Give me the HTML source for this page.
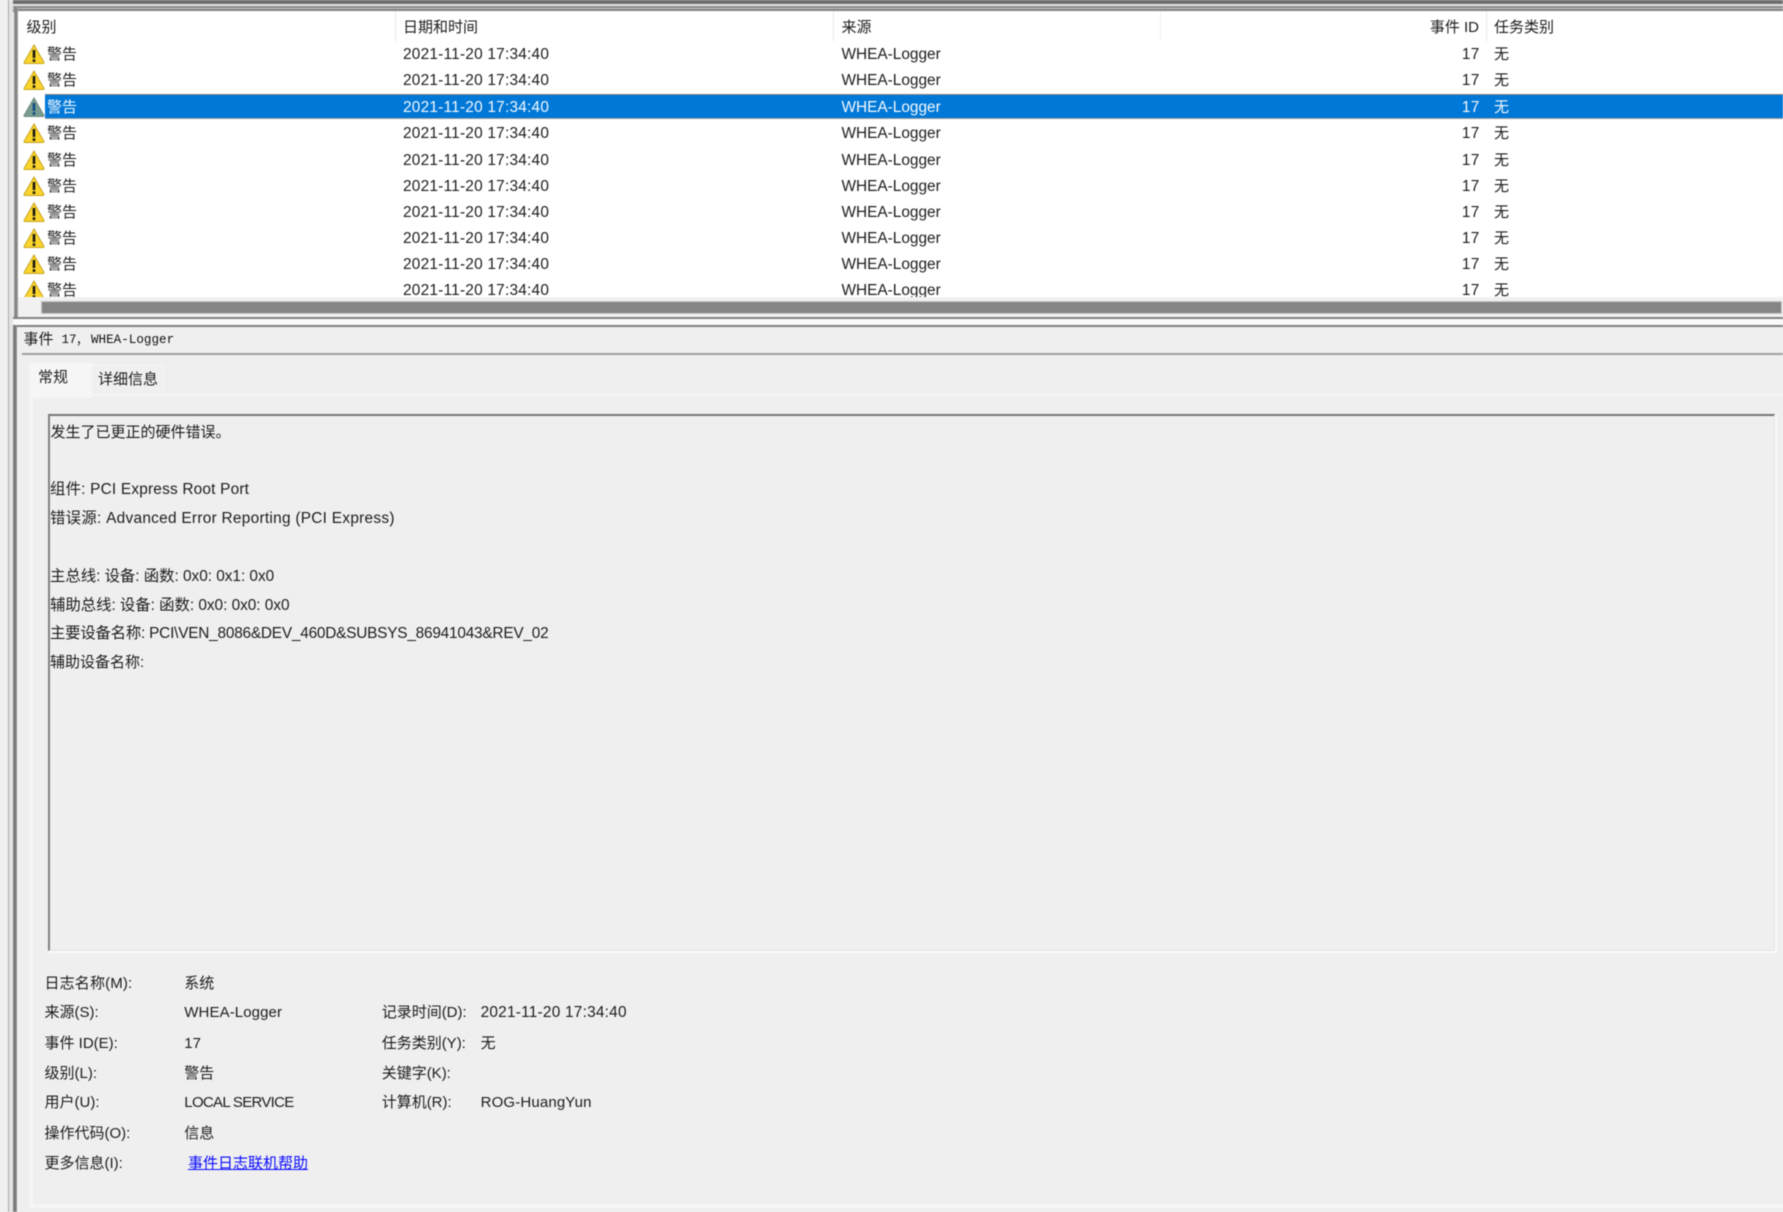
<!DOCTYPE html>
<html lang="zh-CN">
<head>
<meta charset="utf-8">
<title>事件 17，WHEA-Logger</title>
<style>
html,body{margin:0;padding:0;background:#f0f0f0;}
#page{position:relative;width:1783px;height:1212px;overflow:hidden;background:#f0f0f0;
font-family:"Liberation Sans","Noto Sans CJK SC",sans-serif;font-size:15px;color:#1c1c1c;filter:blur(.4px);}
.b{position:absolute;}
.t{position:absolute;white-space:nowrap;line-height:20px;height:20px;}
.d{letter-spacing:.23px;font-size:15.4px;}
.w{letter-spacing:0;font-size:15.4px;}
.row{position:absolute;left:18px;right:0;height:26px;}
.row .t{top:3px;}
.sel{color:#f4f9ff;}
svg{position:absolute;left:5px;top:2px;}
</style>
</head>
<body>
<div id="page">
<!-- outer frame lines -->
<div class="b" style="left:8px;top:0;width:1px;height:1212px;background:#a8a8a8"></div>
<div class="b" style="left:9px;top:0;width:4px;height:1212px;background:#e4e4e4"></div>
<div class="b" style="left:13px;top:0;right:0;height:3.5px;background:#6e6e6e"></div>
<div class="b" style="left:13px;top:3.5px;right:0;height:2px;background:#e6e6e6"></div>
<div class="b" style="left:13px;top:5.5px;right:0;height:2px;background:#8a8a8a"></div>
<div class="b" style="left:13px;top:7.5px;right:0;height:1.5px;background:#c4c4c4"></div>
<div class="b" style="left:13px;top:9px;right:0;height:2.5px;background:#808080"></div>
<div class="b" style="left:14px;top:5.5px;width:4px;height:314px;background:linear-gradient(90deg,#9a9a9a,#7c7c7c 50%,#a8a8a8)"></div>
<div class="b" style="left:13px;top:324px;width:4px;height:888px;background:linear-gradient(90deg,#8e8e8e,#707070 50%,#a0a0a0)"></div>

<!-- list -->
<div class="b" style="left:18px;top:11px;right:0;height:286px;background:#fff;overflow:hidden" id="list">
  <div class="b" style="left:377px;top:0;width:1px;height:30px;background:#e8e8e8"></div>
  <div class="b" style="left:815px;top:0;width:1px;height:30px;background:#e8e8e8"></div>
  <div class="b" style="left:1142px;top:0;width:1px;height:30px;background:#efefef"></div>
  <div class="b" style="left:1468px;top:0;width:1px;height:30px;background:#e8e8e8"></div>
  <div class="t" style="left:8.5px;top:7px">级别</div>
  <div class="t" style="left:385px;top:7px">日期和时间</div>
  <div class="t" style="left:823.5px;top:7px">来源</div>
  <div class="t" style="right:304px;top:7px">事件 ID</div>
  <div class="t" style="left:1476px;top:7px">任务类别</div>

  <div class="row" style="top:31px;left:0"><svg width="22" height="20" viewBox="0 0 22 20"><path d="M11 1 L21 18.5 Q21 19.5 20 19.5 L2 19.5 Q1 19.5 1 18.5 Z" fill="#fbd52c" stroke="#c9a21a"/><rect x="9.7" y="6" width="2.6" height="8" fill="#1a1a10"/><rect x="9.7" y="15.3" width="2.6" height="2.6" fill="#1a1a10"/></svg><div class="t" style="left:29px">警告</div><div class="t d" style="left:385px">2021-11-20 17:34:40</div><div class="t w" style="left:823.5px">WHEA-Logger</div><div class="t d" style="right:303.5px">17</div><div class="t" style="left:1476px">无</div></div>
  <div class="row" style="top:57px;left:0"><svg width="22" height="20" viewBox="0 0 22 20"><path d="M11 1 L21 18.5 Q21 19.5 20 19.5 L2 19.5 Q1 19.5 1 18.5 Z" fill="#fbd52c" stroke="#c9a21a"/><rect x="9.7" y="6" width="2.6" height="8" fill="#1a1a10"/><rect x="9.7" y="15.3" width="2.6" height="2.6" fill="#1a1a10"/></svg><div class="t" style="left:29px">警告</div><div class="t d" style="left:385px">2021-11-20 17:34:40</div><div class="t w" style="left:823.5px">WHEA-Logger</div><div class="t d" style="right:303.5px">17</div><div class="t" style="left:1476px">无</div></div>

  <div class="b" style="left:27px;right:0;top:82.8px;height:25.6px;background:#0078d7;border-top:1px solid #808080;border-bottom:1px solid #9a9a9a;box-sizing:border-box"></div>
  <div class="row sel" style="top:84px;left:0"><svg width="22" height="20" viewBox="0 0 22 20"><path d="M11 1 L21 18.5 Q21 19.5 20 19.5 L2 19.5 Q1 19.5 1 18.5 Z" fill="#7a9b90" stroke="#6a8a80"/><rect x="9.7" y="6" width="2.6" height="8" fill="#0e4c86"/><rect x="9.7" y="15.3" width="2.6" height="2.6" fill="#0e4c86"/></svg><div class="t" style="left:29px">警告</div><div class="t d" style="left:385px">2021-11-20 17:34:40</div><div class="t w" style="left:823.5px">WHEA-Logger</div><div class="t d" style="right:303.5px">17</div><div class="t" style="left:1476px">无</div></div>

  <div class="row" style="top:110px;left:0"><svg width="22" height="20" viewBox="0 0 22 20"><path d="M11 1 L21 18.5 Q21 19.5 20 19.5 L2 19.5 Q1 19.5 1 18.5 Z" fill="#fbd52c" stroke="#c9a21a"/><rect x="9.7" y="6" width="2.6" height="8" fill="#1a1a10"/><rect x="9.7" y="15.3" width="2.6" height="2.6" fill="#1a1a10"/></svg><div class="t" style="left:29px">警告</div><div class="t d" style="left:385px">2021-11-20 17:34:40</div><div class="t w" style="left:823.5px">WHEA-Logger</div><div class="t d" style="right:303.5px">17</div><div class="t" style="left:1476px">无</div></div>
  <div class="row" style="top:137px;left:0"><svg width="22" height="20" viewBox="0 0 22 20"><path d="M11 1 L21 18.5 Q21 19.5 20 19.5 L2 19.5 Q1 19.5 1 18.5 Z" fill="#fbd52c" stroke="#c9a21a"/><rect x="9.7" y="6" width="2.6" height="8" fill="#1a1a10"/><rect x="9.7" y="15.3" width="2.6" height="2.6" fill="#1a1a10"/></svg><div class="t" style="left:29px">警告</div><div class="t d" style="left:385px">2021-11-20 17:34:40</div><div class="t w" style="left:823.5px">WHEA-Logger</div><div class="t d" style="right:303.5px">17</div><div class="t" style="left:1476px">无</div></div>
  <div class="row" style="top:163px;left:0"><svg width="22" height="20" viewBox="0 0 22 20"><path d="M11 1 L21 18.5 Q21 19.5 20 19.5 L2 19.5 Q1 19.5 1 18.5 Z" fill="#fbd52c" stroke="#c9a21a"/><rect x="9.7" y="6" width="2.6" height="8" fill="#1a1a10"/><rect x="9.7" y="15.3" width="2.6" height="2.6" fill="#1a1a10"/></svg><div class="t" style="left:29px">警告</div><div class="t d" style="left:385px">2021-11-20 17:34:40</div><div class="t w" style="left:823.5px">WHEA-Logger</div><div class="t d" style="right:303.5px">17</div><div class="t" style="left:1476px">无</div></div>
  <div class="row" style="top:189px;left:0"><svg width="22" height="20" viewBox="0 0 22 20"><path d="M11 1 L21 18.5 Q21 19.5 20 19.5 L2 19.5 Q1 19.5 1 18.5 Z" fill="#fbd52c" stroke="#c9a21a"/><rect x="9.7" y="6" width="2.6" height="8" fill="#1a1a10"/><rect x="9.7" y="15.3" width="2.6" height="2.6" fill="#1a1a10"/></svg><div class="t" style="left:29px">警告</div><div class="t d" style="left:385px">2021-11-20 17:34:40</div><div class="t w" style="left:823.5px">WHEA-Logger</div><div class="t d" style="right:303.5px">17</div><div class="t" style="left:1476px">无</div></div>
  <div class="row" style="top:215px;left:0"><svg width="22" height="20" viewBox="0 0 22 20"><path d="M11 1 L21 18.5 Q21 19.5 20 19.5 L2 19.5 Q1 19.5 1 18.5 Z" fill="#fbd52c" stroke="#c9a21a"/><rect x="9.7" y="6" width="2.6" height="8" fill="#1a1a10"/><rect x="9.7" y="15.3" width="2.6" height="2.6" fill="#1a1a10"/></svg><div class="t" style="left:29px">警告</div><div class="t d" style="left:385px">2021-11-20 17:34:40</div><div class="t w" style="left:823.5px">WHEA-Logger</div><div class="t d" style="right:303.5px">17</div><div class="t" style="left:1476px">无</div></div>
  <div class="row" style="top:241px;left:0"><svg width="22" height="20" viewBox="0 0 22 20"><path d="M11 1 L21 18.5 Q21 19.5 20 19.5 L2 19.5 Q1 19.5 1 18.5 Z" fill="#fbd52c" stroke="#c9a21a"/><rect x="9.7" y="6" width="2.6" height="8" fill="#1a1a10"/><rect x="9.7" y="15.3" width="2.6" height="2.6" fill="#1a1a10"/></svg><div class="t" style="left:29px">警告</div><div class="t d" style="left:385px">2021-11-20 17:34:40</div><div class="t w" style="left:823.5px">WHEA-Logger</div><div class="t d" style="right:303.5px">17</div><div class="t" style="left:1476px">无</div></div>
  <div class="row" style="top:267px;left:0"><svg width="22" height="20" viewBox="0 0 22 20"><path d="M11 1 L21 18.5 Q21 19.5 20 19.5 L2 19.5 Q1 19.5 1 18.5 Z" fill="#fbd52c" stroke="#c9a21a"/><rect x="9.7" y="6" width="2.6" height="8" fill="#1a1a10"/><rect x="9.7" y="15.3" width="2.6" height="2.6" fill="#1a1a10"/></svg><div class="t" style="left:29px">警告</div><div class="t d" style="left:385px">2021-11-20 17:34:40</div><div class="t w" style="left:823.5px">WHEA-Logger</div><div class="t d" style="right:303.5px">17</div><div class="t" style="left:1476px">无</div></div>
</div>

<!-- horizontal scrollbar -->
<div class="b" style="left:18px;top:297px;right:0;height:20px;background:#f1f1f1"></div>
<div class="b" style="left:40.5px;top:301px;width:1741px;height:12.5px;background:#858585;border:1px solid #c8c8c8;box-sizing:border-box"></div>
<div class="b" style="left:13px;top:317.3px;right:0;height:2px;background:#828282"></div>
<div class="b" style="left:13px;top:319.3px;right:0;height:5.3px;background:#fafafa"></div>
<div class="b" style="left:17px;top:324.6px;right:0;height:2px;background:#808080"></div>

<!-- detail panel -->
<div class="b" style="left:17px;top:326.6px;right:0;height:885.4px;background:#efefef"></div>
<div class="t" style="left:23.5px;top:330px">事件</div>
<div class="t" style="left:61.5px;top:329.5px;font-family:'Liberation Mono',monospace;font-size:12.6px;color:#111">17</div>
<div class="t" style="left:76px;top:330px;font-size:12px;color:#111">，</div>
<div class="t" style="left:91px;top:329.5px;font-family:'Liberation Mono',monospace;font-size:12.6px;color:#111">WHEA-Logger</div>
<div class="b" style="left:22px;top:352.7px;right:0;height:2.6px;background:#a0a0a0"></div>

<!-- tabs -->
<div class="b" style="left:28.7px;top:394px;right:0;height:814px;background:#f6f6f6"></div>
<div class="b" style="left:32.7px;top:396px;right:0;height:808px;background:#efefef"></div>
<div class="b" style="left:28.7px;top:362.7px;width:63.5px;height:35px;background:#f6f6f6"></div>
<div class="b" style="left:92.2px;top:365.3px;width:71.8px;height:29px;background:#f0f0f0;border:1px solid #f6f6f6;border-left:0;border-bottom:0;box-sizing:border-box"></div>
<div class="t" style="left:38px;top:368px">常规</div>
<div class="t" style="left:98px;top:370px">详细信息</div>

<!-- message box -->
<div class="b" style="left:47.5px;top:414px;width:1729.5px;height:539px;box-sizing:border-box;background:#fbfbfb"></div>
<div class="b" style="left:47.5px;top:414px;width:1727.5px;height:537px;box-sizing:border-box;background:#efefef;border-top:2px solid #767676;border-left:2px solid #808080;border-right:1.5px solid #e2e2e2;border-bottom:1.5px solid #e2e2e2"></div>
<div class="t" style="left:50.5px;top:423px">发生了已更正的硬件错误。</div>
<div class="t" style="left:50px;top:480px;font-size:15.4px;letter-spacing:.2px">组件: PCI Express Root Port</div>
<div class="t" style="left:50px;top:509px;font-size:15.4px;letter-spacing:.28px">错误源: Advanced Error Reporting (PCI Express)</div>
<div class="t" style="left:50px;top:567px;font-size:15.4px;letter-spacing:-.03px">主总线: 设备: 函数: 0x0: 0x1: 0x0</div>
<div class="t" style="left:50px;top:596px;font-size:15.4px;letter-spacing:-.03px">辅助总线: 设备: 函数: 0x0: 0x0: 0x0</div>
<div class="t" style="left:50px;top:624px;font-size:15.4px;letter-spacing:-.22px">主要设备名称: PCI\VEN_8086&amp;DEV_460D&amp;SUBSYS_86941043&amp;REV_02</div>
<div class="t" style="left:50px;top:653px;font-size:15px">辅助设备名称:</div>

<!-- fields -->
<div class="t" style="left:44.5px;top:974px;letter-spacing:.15px">日志名称(M):</div>
<div class="t" style="left:184.3px;top:974px">系统</div>
<div class="t" style="left:44.5px;top:1003px">来源(S):</div>
<div class="t" style="left:184.3px;top:1003px;letter-spacing:.1px">WHEA-Logger</div>
<div class="t" style="left:381.7px;top:1003px">记录时间(D):</div>
<div class="t d" style="left:480.6px;top:1003px">2021-11-20 17:34:40</div>
<div class="t" style="left:44.5px;top:1034px">事件 ID(E):</div>
<div class="t" style="left:184.3px;top:1034px">17</div>
<div class="t" style="left:381.7px;top:1034px">任务类别(Y):</div>
<div class="t" style="left:480.6px;top:1034px">无</div>
<div class="t" style="left:44.5px;top:1064px">级别(L):</div>
<div class="t" style="left:184.3px;top:1064px">警告</div>
<div class="t" style="left:381.7px;top:1064px">关键字(K):</div>
<div class="t" style="left:44.5px;top:1093px">用户(U):</div>
<div class="t" style="left:184.3px;top:1093px;letter-spacing:-.7px">LOCAL SERVICE</div>
<div class="t" style="left:381.7px;top:1093px">计算机(R):</div>
<div class="t" style="left:480.6px;top:1093px;letter-spacing:.15px">ROG-HuangYun</div>
<div class="t" style="left:44.5px;top:1124px">操作代码(O):</div>
<div class="t" style="left:184.3px;top:1124px">信息</div>
<div class="t" style="left:44.5px;top:1154px">更多信息(I):</div>
<div class="t" style="left:188px;top:1154px;color:#0a0aff;text-decoration:underline">事件日志联机帮助</div>
</div>
</body>
</html>
